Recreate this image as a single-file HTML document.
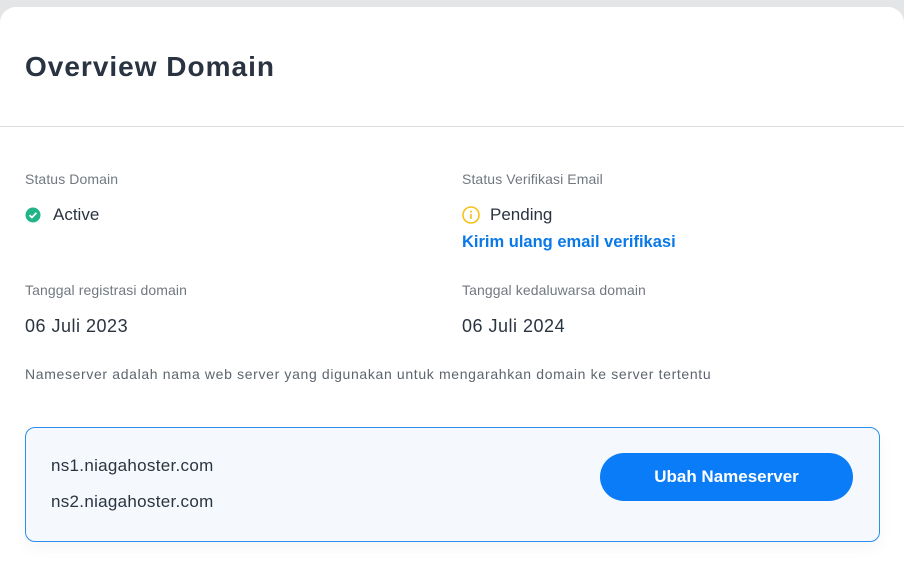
<!DOCTYPE html>
<html><head><meta charset="utf-8"><style>
*{margin:0;padding:0;box-sizing:border-box}
body{width:904px;height:575px;background:#e4e5e7;font-family:"Liberation Sans",sans-serif;overflow:hidden;position:relative}
.card{position:absolute;left:0;top:7px;width:904px;height:580px;background:#fff;border-radius:16px 16px 0 0}
h1{position:absolute;left:25px;top:51px;font-size:28px;font-weight:bold;color:#2a3342;letter-spacing:1px}
.hr{position:absolute;left:0;top:126px;width:904px;height:1px;background:#dcdcdc}
.lab{position:absolute;font-size:14px;color:#727880;letter-spacing:0.1px}
.val{position:absolute;font-size:17px;color:#2a3340}
.box{position:absolute;left:25px;top:427px;width:855px;height:115px;border:1px solid #2b8ff0;border-radius:10px;background:#f5f9fd;box-shadow:0 6px 16px rgba(0,0,0,0.04)}
.btn{position:absolute;left:600px;top:453px;width:253px;height:48px;border-radius:24px;background:#0a7cf7;color:#fff;font-size:17px;font-weight:bold;text-align:center;line-height:48px}
</style></head><body>
<div class="card"></div>
<h1>Overview Domain</h1>
<div class="hr"></div>
<div class="lab" style="left:25px;top:171px">Status Domain</div>
<div class="lab" style="left:462px;top:171px">Status Verifikasi Email</div>
<svg style="position:absolute;left:25px;top:207px" width="16" height="16"><circle cx="8" cy="8" r="7.5" fill="#20b488"/><path d="M4.5 8.2l2.4 2.3 4.5-4.6" stroke="#fff" stroke-width="1.8" fill="none"/></svg>
<div class="val" style="left:53px;top:205px">Active</div>
<svg style="position:absolute;left:462px;top:206px" width="18" height="18"><circle cx="9" cy="9" r="8" fill="none" stroke="#f5c017" stroke-width="1.6"/><rect x="8.2" y="8" width="1.6" height="5" fill="#f5c017"/><circle cx="9" cy="5.6" r="1" fill="#f5c017"/></svg>
<div class="val" style="left:490px;top:205px">Pending</div>
<div class="val" style="left:462px;top:233px;color:#0a79e8;font-weight:bold;font-size:16.5px">Kirim ulang email verifikasi</div>
<div class="lab" style="left:25px;top:282px">Tanggal registrasi domain</div>
<div class="lab" style="left:462px;top:282px">Tanggal kedaluwarsa domain</div>
<div class="val" style="left:25px;top:316px;font-size:18px;letter-spacing:0.5px">06 Juli 2023</div>
<div class="val" style="left:462px;top:316px;font-size:18px;letter-spacing:0.5px">06 Juli 2024</div>
<div class="lab" style="left:25px;top:366px;color:#5e656e;letter-spacing:0.65px">Nameserver adalah nama web server yang digunakan untuk mengarahkan domain ke server tertentu</div>
<div class="box"></div>
<div class="val" style="left:51px;top:456px;letter-spacing:0.3px">ns1.niagahoster.com</div>
<div class="val" style="left:51px;top:492px;letter-spacing:0.3px">ns2.niagahoster.com</div>
<div class="btn">Ubah Nameserver</div>
</body></html>
